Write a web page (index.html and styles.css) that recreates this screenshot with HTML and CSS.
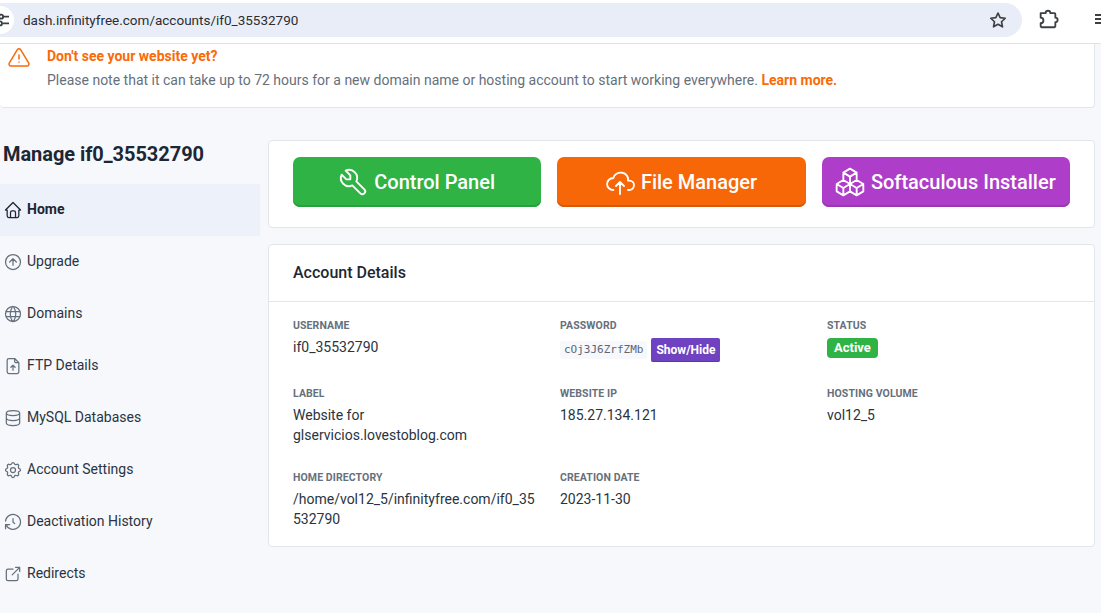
FILE: index.html
```html
<!DOCTYPE html>
<html lang="en">
<head>
  <meta charset="UTF-8">
  <title>Manage if0_35532790</title>
  <link rel="stylesheet" href="styles.css">
</head>
<body>
  <svg class="sprite" xmlns="http://www.w3.org/2000/svg">
    <symbol id="i-home" viewBox="0 0 24 24"><path d="M5 12l-2 0l9 -9l9 9l-2 0M5 12v7a2 2 0 0 0 2 2h10a2 2 0 0 0 2 -2v-7M9 21v-6a2 2 0 0 1 2 -2h2a2 2 0 0 1 2 2v6"/></symbol>
    <symbol id="i-up" viewBox="0 0 24 24"><circle cx="12" cy="12" r="9"/><path d="M12 8l-4 4M12 8v8M16 12l-4 -4"/></symbol>
    <symbol id="i-world" viewBox="0 0 24 24"><path d="M3 12a9 9 0 1 0 18 0a9 9 0 0 0 -18 0M3.6 9h16.8M3.6 15h16.8M11.5 3a17 17 0 0 0 0 18M12.5 3a17 17 0 0 1 0 18"/></symbol>
    <symbol id="i-file" viewBox="0 0 24 24"><path d="M14 3v4a1 1 0 0 0 1 1h4M17 21h-10a2 2 0 0 1 -2 -2v-14a2 2 0 0 1 2 -2h7l5 5v11a2 2 0 0 1 -2 2zM12 11v6M9.5 13.5l2.5 -2.5l2.5 2.5"/></symbol>
    <symbol id="i-db" viewBox="0 0 24 24"><path d="M4 6a8 3 0 1 0 16 0a8 3 0 1 0 -16 0M4 6v6a8 3 0 0 0 16 0v-6M4 12v6a8 3 0 0 0 16 0v-6"/></symbol>
    <symbol id="i-gear" viewBox="0 0 24 24"><path d="M10.325 4.317c.426 -1.756 2.924 -1.756 3.35 0a1.724 1.724 0 0 0 2.573 1.066c1.543 -.94 3.31 .826 2.37 2.37a1.724 1.724 0 0 0 1.065 2.572c1.756 .426 1.756 2.924 0 3.35a1.724 1.724 0 0 0 -1.066 2.573c.94 1.543 -.826 3.31 -2.37 2.37a1.724 1.724 0 0 0 -2.572 1.065c-.426 1.756 -2.924 1.756 -3.35 0a1.724 1.724 0 0 0 -2.573 -1.066c-1.543 .94 -3.31 -.826 -2.37 -2.37a1.724 1.724 0 0 0 -1.065 -2.572c-1.756 -.426 -1.756 -2.924 0 -3.35a1.724 1.724 0 0 0 1.066 -2.573c-.94 -1.543 .826 -3.31 2.37 -2.37c1 .608 2.296 .07 2.572 -1.065z"/><circle cx="12" cy="12" r="3"/></symbol>
    <symbol id="i-history" viewBox="0 0 24 24"><path d="M12 8l0 4l2 2M3.05 11a9 9 0 1 1 .5 4m-.5 5v-5h5"/></symbol>
    <symbol id="i-link" viewBox="0 0 24 24"><path d="M12 6h-6a2 2 0 0 0 -2 2v10a2 2 0 0 0 2 2h10a2 2 0 0 0 2 -2v-6M11 13l9 -9M15 4h5v5"/></symbol>
    <symbol id="i-tool" viewBox="0 0 24 24"><path d="M7 10h3v-3l-3.5 -3.5a6 6 0 0 1 8 8l6 6a2 2 0 0 1 -3 3l-6 -6a6 6 0 0 1 -8 -8l3.5 3.5"/></symbol>
    <symbol id="i-cloud" viewBox="0 0 24 24"><path d="M7 18a4.6 4.4 0 0 1 0 -9a5 4.5 0 0 1 11 2h1a3.5 3.5 0 0 1 0 7h-1M9 15l3 -3l3 3M12 12l0 9"/></symbol>
    <symbol id="i-boxes" viewBox="0 0 24 24"><path d="M7 16.5l-5 -3l5 -3l5 3v5.5l-5 3zM2 13.5v5.5l5 3M7 16.545l5 -3.03M17 16.5l-5 -3l5 -3l5 3v5.5l-5 3zM12 19l5 3M17 16.5l5 -3M12 13.5v-5.5l-5 -3l5 -3l5 3v5.5M7 5.03v5.455M12 8l5 -3"/></symbol>
  </svg>

  <header class="browser">
    <div class="omnibox">
      <span class="site-info">
        <svg viewBox="0 0 16 16"><path d="M0 5h7M11 5h5M5 11h-5M16 11h-5"/><circle cx="9" cy="5" r="1.8"/><circle cx="8" cy="11" r="1.8"/></svg>
      </span>
      <span class="url">dash.infinityfree.com/accounts/if0_35532790</span>
      <svg class="star" viewBox="0 0 24 24"><path d="M12 3.600l2.600 5.600 6.100.7-4.500 4.200 1.200 6.100-5.400-3-5.400 3 1.200-6.100-4.500-4.200 6.100-.7z"/></svg>
    </div>
    <svg class="puzzle" viewBox="0 0 24 24"><path d="M4 5.500h5.500a2.500 2.500 0 0 1 5 0H19a1 1 0 0 1 1 1V10.500a2.500 2.500 0 0 1 0 5V20a1 1 0 0 1-1 1H5a1 1 0 0 1-1-1v-3.500a3 3 0 0 0 0-6z"/></svg>
    <span class="divider"></span>
    <span class="menu"><i></i><i></i><i></i></span>
  </header>

  <div class="page">
    <section class="notice">
      <svg class="notice-icon" viewBox="0 0 24 24"><path d="M12 9v4M10.363 3.591l-8.106 13.534a1.914 1.914 0 0 0 1.636 2.871h16.214a1.914 1.914 0 0 0 1.636 -2.87l-8.106 -13.536a1.914 1.914 0 0 0 -3.274 0zM12 16h.01"/></svg>
      <div>
        <h4>Don't see your website yet?</h4>
        <p>Please note that it can take up to 72 hours for a new domain name or hosting account to start working everywhere. <a href="#">Learn more.</a></p>
      </div>
    </section>

    <div class="columns">
      <aside class="sidebar">
        <h2>Manage if0_35532790</h2>
        <nav>
          <a class="active" href="#"><svg><use href="#i-home"/></svg>Home</a>
          <a href="#"><svg><use href="#i-up"/></svg>Upgrade</a>
          <a href="#"><svg><use href="#i-world"/></svg>Domains</a>
          <a href="#"><svg><use href="#i-file"/></svg>FTP Details</a>
          <a href="#"><svg><use href="#i-db"/></svg>MySQL Databases</a>
          <a href="#"><svg><use href="#i-gear"/></svg>Account Settings</a>
          <a href="#"><svg><use href="#i-history"/></svg>Deactivation History</a>
          <a href="#"><svg><use href="#i-link"/></svg>Redirects</a>
        </nav>
      </aside>

      <main class="content">
        <section class="card actions">
          <a class="btn green" href="#"><svg><use href="#i-tool"/></svg>Control Panel</a>
          <a class="btn orange" href="#"><svg><use href="#i-cloud"/></svg>File Manager</a>
          <a class="btn purple" href="#"><svg><use href="#i-boxes"/></svg>Softaculous Installer</a>
        </section>

        <section class="card details">
          <h3>Account Details</h3>
          <div class="grid">
            <div class="field">
              <label>Username</label>
              <div>if0_35532790</div>
            </div>
            <div class="field">
              <label>Password</label>
              <div class="password"><code>cOj3J6ZrfZMb</code><button>Show/Hide</button></div>
            </div>
            <div class="field">
              <label>Status</label>
              <div><span class="badge">Active</span></div>
            </div>
            <div class="field">
              <label>Label</label>
              <div>Website for glservicios.lovestoblog.com</div>
            </div>
            <div class="field">
              <label>Website IP</label>
              <div>185.27.134.121</div>
            </div>
            <div class="field">
              <label>Hosting Volume</label>
              <div>vol12_5</div>
            </div>
            <div class="field">
              <label>Home Directory</label>
              <div>/home/vol12_5/infinityfree.com/if0_35532790</div>
            </div>
            <div class="field">
              <label>Creation Date</label>
              <div>2023-11-30</div>
            </div>
          </div>
        </section>
      </main>
    </div>
  </div>
</body>
</html>
```

FILE: styles.css
```css
* {
  box-sizing: border-box;
}
html, body {
  margin: 0;
  height: 613px;
  overflow: hidden;
}
body {
  font-family: Roboto, "Liberation Sans", sans-serif;
  font-size: 14px;
  color: #1d2733;
  background: #f6f8fc;
}
a {
  text-decoration: none;
  color: inherit;
}
.sprite {
  display: none;
}
svg {
  fill: none;
  stroke: currentColor;
  stroke-width: 1.5;
  stroke-linecap: round;
  stroke-linejoin: round;
  flex: none;
}

/* browser chrome */
.browser {
  display: flex;
  align-items: flex-start;
  height: 44px;
  padding-top: 3px;
  background: #fff;
  border-bottom: 1px solid #dfe1e5;
}
.omnibox {
  display: flex;
  align-items: center;
  flex: none;
  width: 1022px;
  height: 34px;
  background: #e9edf7;
  border-radius: 0 17px 17px 0;
}
.site-info {
  display: flex;
  align-items: center;
  justify-content: center;
  width: 28px;
  height: 28px;
  margin-left: -14px;
  border-radius: 50%;
  background: #fff;
  color: #3c4043;
}
.site-info svg {
  width: 18px;
  height: 18px;
  stroke-width: 1.6;
}
.url {
  margin-left: 9px;
  font-size: 13.500px;
  color: #2b2e33;
  flex: 1;
}
.star {
  width: 20px;
  height: 20px;
  margin-right: 14px;
  color: #3c4043;
  stroke-width: 2;
}
.puzzle {
  width: 22px;
  height: 22px;
  margin: 5px 0 0 15px;
  color: #3c4043;
  stroke-width: 2;
}
.divider {
  width: 1px;
  height: 15px;
  margin: 9px 0 0 15px;
  background: #c9d7f0;
}
.menu {
  display: flex;
  flex-direction: column;
  gap: 2px;
  flex: none;
  margin: 11px 0 0 21px;
}
.menu i {
  display: block;
  width: 8px;
  height: 2px;
  background: #3c4043;
}

/* notice */
.notice {
  display: flex;
  width: 1095px;
  height: 64px;
  background: #fff;
  border: 1px solid #e2e5ea;
  border-width: 0 1px 1px 0;
  border-radius: 0 0 4px 4px;
  padding: 2px 0 0 7px;
}
.notice-icon {
  width: 24px;
  height: 24px;
  margin-right: 16px;
  color: #f96a08;
}
.notice h4 {
  margin: 0;
  font-size: 14px;
  line-height: 20px;
  font-weight: 700;
  color: #f96a08;
}
.notice p {
  margin: 4px 0 0;
  line-height: 20px;
  color: #66707c;
}
.notice a {
  font-weight: 700;
  color: #f96a08;
}

/* layout */
.columns {
  display: flex;
  gap: 8px;
  padding-top: 32px;
  width: 1095px;
}
.sidebar {
  width: 260px;
  flex: none;
}
.sidebar h2 {
  margin: 0;
  padding-left: 3px;
  font-size: 20px;
  line-height: 28px;
  font-weight: 700;
  letter-spacing: -.05px;
  color: #1d2733;
}
.sidebar nav {
  margin-top: 16px;
}
.sidebar nav a {
  display: flex;
  align-items: center;
  gap: 4px;
  height: 52px;
  padding: 0 0 2px 3px;
  color: #2a3441;
}
.sidebar nav a.active {
  background: #edf1f9;
  font-weight: 700;
  color: #1d2733;
}
.sidebar nav svg {
  width: 20px;
  height: 20px;
  margin-top: 1px;
  color: #66707c;
}
.sidebar nav a.active svg {
  color: #1d2733;
}
.content {
  flex: 1;
  min-width: 0;
}

/* cards */
.card {
  background: #fff;
  border: 1px solid #e2e5ea;
  border-radius: 4px;
}
.actions {
  display: flex;
  gap: 16px;
  height: 88px;
  padding: 16px 24px 0;
  margin-bottom: 16px;
}
.btn {
  display: flex;
  align-items: center;
  justify-content: center;
  flex: 1;
  gap: 7px;
  height: 50px;
  border-radius: 7px;
  color: #fff;
  font-size: 20px;
  font-weight: 500;
}
.btn svg {
  width: 32px;
  height: 32px;
  margin: 0 -2px;
  stroke-width: 1.4;
}
.green {
  background: #2fb344;
  box-shadow: inset 0 -2px 0 #2a9f3d;
}
.orange {
  background: #f76707;
  box-shadow: inset 0 -2px 0 #d9590a;
}
.purple {
  background: #ae3ec9;
  box-shadow: inset 0 -2px 0 #9a37b1;
}
.details h3 {
  margin: 0;
  height: 57px;
  padding: 0 24px;
  font-size: 16px;
  line-height: 56px;
  font-weight: 500;
  color: #1d2733;
  border-bottom: 1px solid #e2e5ea;
}
.grid {
  display: grid;
  grid-template-columns: repeat(3, 243px);
  column-gap: 24px;
  row-gap: 25px;
  padding: 16px 24px 17px;
}
.field label {
  display: block;
  font-size: 10.500px;
  line-height: 16px;
  font-weight: 700;
  letter-spacing: .1px;
  text-transform: uppercase;
  color: #66707c;
  margin-bottom: 3px;
}
.field > div {
  line-height: 20px;
  overflow-wrap: anywhere;
  color: #2a3441;
}
.password {
  display: flex;
  align-items: center;
  height: 24px;
  margin: 4px 0 -1px;
}
code {
  font-family: "DejaVu Sans Mono", monospace;
  font-size: 11px;
  line-height: 18px;
  padding: 0 4px;
  border-radius: 3px;
  background: #f6f8fc;
  color: #5d6673;
}
button {
  height: 24px;
  width: 69px;
  margin-left: 4px;
  padding: 0;
  white-space: nowrap;
  border: none;
  border-bottom: 1px solid #5f36a8;
  border-radius: 2px;
  background: #6f42c1;
  color: #fff;
  font-family: inherit;
  font-size: 12px;
  font-weight: 700;
}
.badge {
  display: inline-block;
  height: 20px;
  padding: 0 7px;
  border-radius: 4px;
  background: #2fb344;
  color: #fff;
  font-size: 13px;
  font-weight: 700;
  line-height: 20px;
}
```
